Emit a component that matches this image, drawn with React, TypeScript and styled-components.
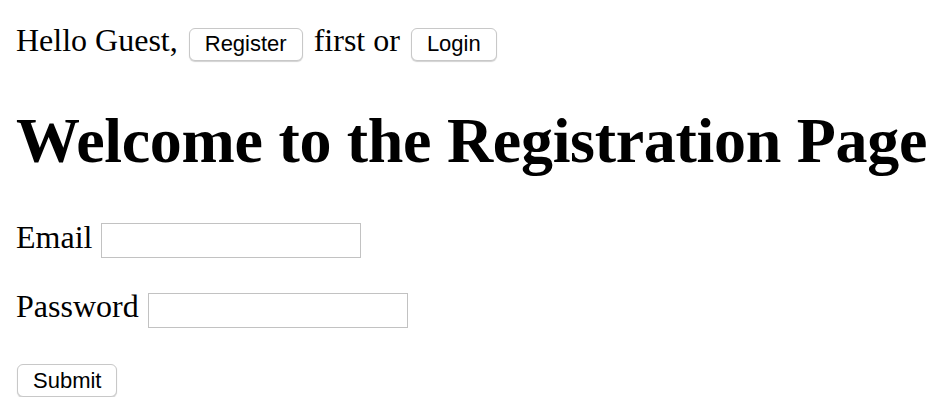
import React from "react";
import styled, { createGlobalStyle } from "styled-components";

const GlobalStyle = createGlobalStyle`
  html {
    background: #ffffff;
  }
  body {
    margin: 16px;
    font-family: "Liberation Serif", "Times New Roman", serif;
    font-size: 32px;
    color: #000000;
    background: #ffffff;
  }
`;

const Greeting = styled.div`
  padding-top: 6px;
`;

const Button = styled.button`
  display: inline-block;
  box-sizing: border-box;
  height: 33px;
  margin: 0 3px;
  padding: 0 15px;
  font-family: "Liberation Sans", Arial, sans-serif;
  font-size: 22px;
  color: #000000;
  background: #ffffff;
  border: 1px solid #c8c8c8;
  border-radius: 6px;
  box-shadow: 0 1px 1px rgba(0, 0, 0, 0.18);
  cursor: pointer;
`;

const Heading = styled.h1`
  font-size: 64px;
  font-weight: bold;
  letter-spacing: -0.3px;
  margin: 43px 0 41px;
  white-space: nowrap;
`;

const Form = styled.form`
  margin: 0;
`;

const Field = styled.p`
  margin: 30px 0;
`;

const Label = styled.label`
  margin-right: 1px;
`;

const TextInput = styled.input`
  box-sizing: border-box;
  width: 260px;
  height: 35px;
  padding: 0 4px;
  font-family: "Liberation Sans", Arial, sans-serif;
  font-size: 22px;
  border: 1px solid #c2c2c2;
  border-radius: 0;
  outline: none;
  background: #ffffff;
`;

const SubmitRow = styled.p`
  margin: 31px 0 0;
`;

const SubmitButton = styled(Button)`
  margin: 0 0 0 1px;
`;

export default function App() {
  return (
    <>
      <GlobalStyle />
      <Greeting>
        Hello Guest, <Button type="button">Register</Button> first or{" "}
        <Button type="button">Login</Button>
      </Greeting>
      <Heading>Welcome to the Registration Page</Heading>
      <Form onSubmit={(e) => e.preventDefault()}>
        <Field>
          <Label htmlFor="email">Email</Label> <TextInput id="email" type="text" />
        </Field>
        <Field>
          <Label htmlFor="password">Password</Label> <TextInput id="password" type="password" />
        </Field>
        <SubmitRow>
          <SubmitButton type="submit">Submit</SubmitButton>
        </SubmitRow>
      </Form>
    </>
  );
}
